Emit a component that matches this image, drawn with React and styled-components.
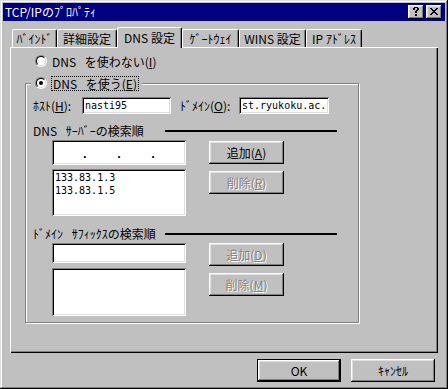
import React from "react";
import styled, { createGlobalStyle } from "styled-components";

const GlobalStyle = createGlobalStyle`
  html, body { margin: 0; padding: 0; background: #c0c0c0; }
  body {
    font-family: "Noto Sans CJK JP", "Noto Sans", sans-serif;
    font-size: 12px;
    color: #000;
  }
  * { box-sizing: border-box; }
`;

const raised = `
  box-shadow: inset -1px -1px #000, inset 1px 1px #fff, inset -2px -2px #808080, inset 2px 2px #dfdfdf;
`;
const sunken = `
  box-shadow: inset 1px 1px #808080, inset -1px -1px #fff, inset 2px 2px #000, inset -2px -2px #dfdfdf;
`;

const Window = styled.div`
  width: 448px;
  height: 389px;
  padding: 3px;
  background: #c0c0c0;
  box-shadow: inset -1px -1px #000, inset 1px 1px #dfdfdf, inset -2px -2px #808080, inset 2px 2px #fff;
  display: flex;
  flex-direction: column;
`;

const TitleBar = styled.div`
  height: 18px;
  background: #000080;
  color: #fff;
  display: flex;
  align-items: center;
  padding: 0 3px 0 2px;
`;

const TitleText = styled.div`
  flex: 1;
  line-height: 18px;
  font-size: 12px;
  white-space: nowrap;
`;

const TitleButtons = styled.div`
  display: flex;
  gap: 2px;
`;

const TitleButton = styled.div`
  width: 16px;
  height: 14px;
  background: #c0c0c0;
  ${raised}
  display: flex;
  align-items: center;
  justify-content: center;
  padding-bottom: 1px;
`;

const Body = styled.div`
  flex: 1;
  display: flex;
  flex-direction: column;
  padding: 6px 7px 0 7px;
`;

const TabRow = styled.div`
  position: relative;
  z-index: 1;
  display: flex;
  align-items: flex-end;
  height: 21px;
  margin-bottom: -1px;
  padding-left: 2px;
`;

const Tab = styled.div`
  width: ${(p) => p.$w}px;
  height: ${(p) => (p.$active ? 21 : 18)}px;
  margin-bottom: ${(p) => (p.$active ? 0 : 1)}px;
  background: #c0c0c0;
  border-top: 1px solid #fff;
  border-left: 1px solid #fff;
  border-right: 1px solid #000;
  border-radius: 2px 2px 0 0;
  box-shadow: inset -1px 0 #808080;
  display: flex;
  align-items: center;
  justify-content: center;
  white-space: pre;
  padding-bottom: ${(p) => (p.$active ? 2 : 0)}px;
`;

const Panel = styled.div`
  height: 306px;
  background: #c0c0c0;
  box-shadow: inset 1px 1px #fff, inset -1px -1px #000, inset -2px -2px #808080;
  padding: 7px 0 0 25px;
  display: flex;
  flex-direction: column;
`;

const RadioRow = styled.label`
  display: flex;
  align-items: center;
  height: 14px;
  gap: 5px;
  white-space: pre;
`;

const RadioOuter = styled.span`
  flex: none;
  width: 12px;
  height: 12px;
  border-radius: 50%;
  border: 1px solid;
  border-color: #808080 #fff #fff #808080;
  display: flex;
  align-items: center;
  justify-content: center;
`;

const RadioInner = styled.span`
  width: 10px;
  height: 10px;
  border-radius: 50%;
  border: 1px solid;
  border-color: #000 #dfdfdf #dfdfdf #000;
  background: #fff;
  display: flex;
  align-items: center;
  justify-content: center;
`;

const RadioDot = styled.span`
  width: 4px;
  height: 4px;
  border-radius: 50%;
  background: #000;
`;

const Focus = styled.span`
  outline: 1px dotted #000;
  outline-offset: 0;
  padding: 0 1px;
  line-height: 13px;
`;

const GroupBox = styled.div`
  position: relative;
  margin: 15px 0 0 -10px;
  width: 334px;
  height: 240px;
  border: 1px solid #808080;
  box-shadow: inset 1px 1px #fff, 1px 1px #fff;
  padding: 13px 0 0 7px;
  display: flex;
  flex-direction: column;
`;

const Legend = styled.div`
  position: absolute;
  top: -8px;
  left: 5px;
  background: #c0c0c0;
  padding: 0 4px 0 4px;
`;

const FieldRow = styled.div`
  display: flex;
  align-items: center;
  height: 17px;
`;

const FieldLabel = styled.span`
  width: ${(p) => p.$w}px;
  margin-left: ${(p) => p.$ml || 0}px;
  white-space: nowrap;
`;

const TextBox = styled.div`
  width: ${(p) => p.$w}px;
  height: ${(p) => p.$h}px;
  background: #fff;
  ${sunken}
  padding: 2px 3px;
  font-family: "DejaVu Sans Mono", "Liberation Mono", monospace;
  font-size: 10px;
  line-height: 13px;
  white-space: nowrap;
  overflow: hidden;
`;

const IpBox = styled.div`
  width: 134px;
  height: 25px;
  background: #fff;
  ${sunken}
  display: grid;
  grid-template-columns: 1fr auto 1fr auto 1fr auto 1fr;
  align-items: end;
  padding: 0 2px 4px;
  font-family: "DejaVu Sans Mono", "Liberation Mono", monospace;
  font-size: 11px;
  line-height: 12px;
  font-weight: bold;
`;

const Heading = styled.div`
  display: flex;
  align-items: center;
  height: 14px;
  margin-top: ${(p) => p.$mt}px;
`;

const HeadingLabel = styled.span`
  width: 132px;
  white-space: pre;
`;

const HeadingLine = styled.span`
  width: 172px;
  height: 2px;
  background: #000;
  margin-top: 1px;
`;

const Block = styled.div`
  display: flex;
  margin: 3px 0 0 19px;
  gap: 23px;
`;

const Column = styled.div`
  display: flex;
  flex-direction: column;
  gap: ${(p) => p.$gap}px;
  padding-top: ${(p) => p.$pt || 0}px;
`;

const Button = styled.div`
  width: ${(p) => p.$w}px;
  height: 23px;
  background: #c0c0c0;
  ${raised}
  display: flex;
  align-items: center;
  justify-content: center;
  white-space: nowrap;
  color: ${(p) => (p.$disabled ? "#808080" : "#000")};
  text-shadow: ${(p) => (p.$disabled ? "1px 1px 0 #fff" : "none")};
  ${(p) =>
    p.$default &&
    `
    border: 1px solid #000;
  `}
`;

const Footer = styled.div`
  display: flex;
  justify-content: flex-end;
  gap: 10px;
  margin-top: 6px;
  padding-right: 3px;
`;

const Px = ({ rows, color = "#000" }) => {
  const h = rows.length;
  const w = rows[0].length;
  const rects = [];
  rows.forEach((r, y) =>
    r.split("").forEach((c, x) => {
      if (c === "X") rects.push(<rect key={`${x}-${y}`} x={x} y={y} width="1" height="1" />);
    })
  );
  return (
    <svg width={w} height={h} viewBox={`0 0 ${w} ${h}`} shapeRendering="crispEdges" fill={color}>
      {rects}
    </svg>
  );
};

const HELP = [".XXXX.", "XX..XX", "XX..XX", "...XX.", "..XX..", "..XX..", "......", "..XX..", "..XX.."];
const CLOSE = ["XX....XX", ".XX..XX.", "..XXXX..", "...XX...", "..XXXX..", ".XX..XX.", "XX....XX"];

const Radio = ({ checked }) => (
  <RadioOuter>
    <RadioInner>{checked && <RadioDot />}</RadioInner>
  </RadioOuter>
);

const SP = "\u2002 ";

const tabs = [
  { label: "ﾊﾞｲﾝﾄﾞ", w: 45 },
  { label: "詳細設定", w: 60 },
  { label: "DNS 設定", w: 65, active: true },
  { label: "ｹﾞｰﾄｳｪｲ", w: 57 },
  { label: "WINS 設定", w: 67 },
  { label: "IP ｱﾄﾞﾚｽ", w: 56 },
];

export default function App() {
  return (
    <>
      <GlobalStyle />
      <Window>
        <TitleBar>
          <TitleText>TCP/IPのﾌﾟﾛﾊﾟﾃｨ</TitleText>
          <TitleButtons>
            <TitleButton>
              <Px rows={HELP} />
            </TitleButton>
            <TitleButton>
              <Px rows={CLOSE} />
            </TitleButton>
          </TitleButtons>
        </TitleBar>
        <Body>
          <TabRow>
            {tabs.map((t) => (
              <Tab key={t.label} $w={t.w} $active={t.active}>
                {t.label}
              </Tab>
            ))}
          </TabRow>
          <Panel>
            <RadioRow>
              <Radio />
              <span>
                {`DNS${SP}を使わない(`}
                <u>I</u>)
              </span>
            </RadioRow>
            <GroupBox>
              <Legend>
                <RadioRow>
                  <Radio checked />
                  <Focus>
                    {`DNS${SP}を使う(`}
                    <u>E</u>)
                  </Focus>
                </RadioRow>
              </Legend>
              <FieldRow>
                <FieldLabel $w={49}>
                  ﾎｽﾄ(<u>H</u>):
                </FieldLabel>
                <TextBox $w={89} $h={17}>nasti95</TextBox>
                <FieldLabel $w={59} $ml={9}>
                  ﾄﾞﾒｲﾝ(<u>O</u>):
                </FieldLabel>
                <TextBox $w={90} $h={17}>st.ryukoku.ac.</TextBox>
              </FieldRow>
              <Heading $mt={9}>
                <HeadingLabel>{`DNS${SP}ｻｰﾊﾞｰの検索順`}</HeadingLabel>
                <HeadingLine />
              </Heading>
              <Block>
                <Column $gap={4}>
                  <IpBox>
                    <span />
                    <span>.</span>
                    <span />
                    <span>.</span>
                    <span />
                    <span>.</span>
                    <span />
                  </IpBox>
                  <TextBox $w={134} $h={47}>
                    133.83.1.3
                    <br />
                    133.83.1.5
                  </TextBox>
                </Column>
                <Column $gap={7} $pt={1}>
                  <Button $w={75}>
                    追加(<u>A</u>)
                  </Button>
                  <Button $w={75} $disabled>
                    削除(<u>R</u>)
                  </Button>
                </Column>
              </Block>
              <Heading $mt={10}>
                <HeadingLabel>{`ﾄﾞﾒｲﾝ${SP}ｻﾌｨｯｸｽの検索順`}</HeadingLabel>
                <HeadingLine />
              </Heading>
              <Block>
                <Column $gap={5}>
                  <TextBox $w={134} $h={20} />
                  <TextBox $w={134} $h={48} />
                </Column>
                <Column $gap={7}>
                  <Button $w={75} $disabled>
                    追加(<u>D</u>)
                  </Button>
                  <Button $w={75} $disabled>
                    削除(<u>M</u>)
                  </Button>
                </Column>
              </Block>
            </GroupBox>
          </Panel>
          <Footer>
            <Button $w={84} $default>
              OK
            </Button>
            <Button $w={84}>ｷｬﾝｾﾙ</Button>
          </Footer>
        </Body>
      </Window>
    </>
  );
}
